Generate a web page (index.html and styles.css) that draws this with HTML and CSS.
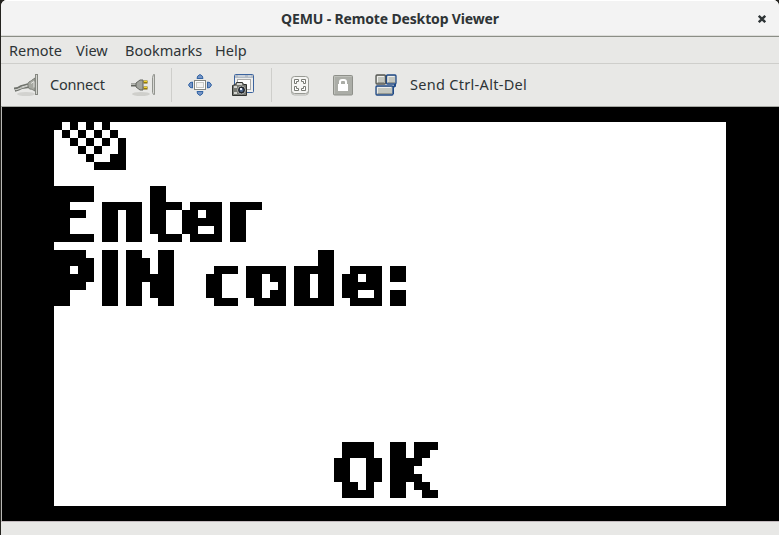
FILE: index.html
```html
<!DOCTYPE html>
<html lang="en">
<head>
<meta charset="utf-8">
<title>QEMU - Remote Desktop Viewer</title>
<link rel="stylesheet" href="styles.css">
</head>
<body>
<div class="window">
  <header class="titlebar">
    <h1 class="title">QEMU - Remote Desktop Viewer</h1>
    <svg class="close" width="8" height="8" viewBox="0 0 8 8"><path d="M.8.8l6.400 6.400M7.200.8L.8 7.200" stroke="#2e3436" stroke-width="2.300" fill="none"/></svg>
  </header>
  <nav class="menubar"><span class="m-remote">Remote</span><span class="m-view">View</span><span class="m-book">Bookmarks</span><span class="m-help">Help</span></nav>
  <div class="toolbar">
    <div class="tool connect">
      <svg width="26" height="24" viewBox="0 0 26 24">
        <ellipse cx="13" cy="21" rx="9" ry="2" fill="#d2d2cf"/>
        <path d="M1 15.500q4 0 7-2.500l7-2M2 18q4-1 7-3l7-1" stroke="#70736d" stroke-width="1.800" fill="none"/>
        <path d="M3 16.800l12-4" stroke="#d0d1cc" fill="none"/>
        <path d="M22 5c-3 2-4 3-6 4-2 1-1 7 1 7 2 0 3 1 5 2z" fill="#a6a8a1" stroke="#777a73"/>
        <path d="M18 10.500l3-2v6" stroke="#e3e3df" fill="none"/>
        <rect x="22.500" y="1.500" width="2" height="20" fill="#d4d5d0" stroke="#858781"/>
      </svg>
      <span class="l-connect">Connect</span>
    </div>
    <svg class="tool unplug" width="26" height="24" viewBox="0 0 26 24">
      <ellipse cx="10" cy="21" rx="9" ry="2" fill="#cfcfcb"/>
      <path d="M0 12h7" stroke="#62655f" stroke-width="3"/>
      <path d="M0 11.500h6" stroke="#b6b8b2"/>
      <path d="M5 10l4-3h3v10H9l-4-3z" fill="#a2a49e" stroke="#62655f"/>
      <path d="M12.500 9h4M12.500 15h4" stroke="#795f00" stroke-width="3"/>
      <path d="M13 8.500h3M13 14.500h3" stroke="#f0d32e" stroke-width="1.500"/>
      <path d="M23.500 1.500v20h-1l-1-2v-15l1-3z" fill="#d7d8d4" stroke="#92948f"/>
    </svg>
    <i class="sep s1"></i>
    <svg class="tool fullscreen" width="24" height="22" viewBox="0 0 24 22">
      <g fill="#7795c5" stroke="#3465a4">
        <path d="M9 4.500q0-3 3-4 3 1 3 4z"/><path d="M9 17.500q0 3 3 4 3-1 3-4z"/>
        <path d="M4.500 8q-3 0-4 3 1 3 4 3z"/><path d="M19.500 8q3 0 4 3-1 3-4 3z"/>
      </g>
      <rect x="6.500" y="6.500" width="11" height="9" fill="#fff" stroke="#858781"/>
      <rect x="8.500" y="8.500" width="7" height="5" fill="#f4f4f2" stroke="#c8c9c4"/>
    </svg>
    <svg class="tool shot" width="24" height="24" viewBox="0 0 24 24">
      <rect x="3.500" y="1.500" width="19" height="18" rx="1" fill="#eeeeec" stroke="#3b639e"/>
      <path d="M4 3.500h18" stroke="#b4bcc6" stroke-width="3"/><path d="M7 3h7M17 3h3" stroke="#dce3ec"/>
      <rect x="6.500" y="6.500" width="13" height="10" fill="#fff" stroke="#aaa"/>
      <path d="M1.500 12.500l3-1 1-2h6l1 2h3v11h-14z" fill="#777973" stroke="#30322f"/>
      <path d="M3 14h3M6 11h5M3 20h3" stroke="#d3d4d0" stroke-width="2"/>
      <circle cx="10.500" cy="17" r="4" fill="#20242b" stroke="#b2b3ae"/><circle cx="10.500" cy="17" r="2" fill="#50698e"/><path d="M9 15h2v2H9z" fill="#e7edf5"/>
    </svg>
    <i class="sep s2"></i>
    <svg class="tool scale" width="20" height="21" viewBox="0 0 20 21">
      <rect x="1.500" y="2.500" width="17" height="17.500" rx="3" fill="none" stroke="#b4b5b1"/>
      <rect x="1.500" y="1.500" width="17" height="17" rx="3" fill="#f5f5f3" stroke="#989a94"/>
      <path d="M4.500 8.500v-4h4v2h-2v2zM11.500 4.500h4v4h-2v-2h-2zM4.500 11.500h2v2h2v2h-4zM13.500 11.500h2v4h-4v-2h2z" fill="#fff" stroke="#777973"/>
    </svg>
    <svg class="tool lock" width="20" height="21" viewBox="0 0 20 21">
      <rect x=".5" y=".5" width="19" height="19.500" rx="1" fill="#abada7" stroke="#8e908a"/>
      <path d="M1.500 19V1.500h17" fill="none" stroke="#bec0ba"/>
      <path d="M5 9h1V7q0-3 3-3h2q3 0 3 3v2h1v7H5zM8 9h4V7q0-1-1-1H9Q8 6 8 7z" fill="#fff" fill-rule="evenodd"/>
    </svg>
    <div class="tool send">
      <svg width="22" height="22" viewBox="0 0 22 22">
        <path d="M20 9v3l-2 1v7" stroke="#204a87" stroke-width="2" fill="none"/>
        <rect x="1" y="1" width="9.500" height="9" rx="1" fill="#c3c6bf" stroke="#555753" stroke-width="1.300"/>
        <rect x="11.500" y="1" width="9.500" height="9" rx="1" fill="#c3c6bf" stroke="#204a87" stroke-width="1.300"/>
        <rect x="1" y="12" width="17" height="9" rx="1" fill="#c3c6bf" stroke="#204a87" stroke-width="1.300"/>
        <path d="M2.500 8V2.500H9M13 8V2.500h6.500M2.500 19v-5.500H16" stroke="#eeeeec" fill="none"/>
        <path d="M3 8.500h6M13 8.500h7M3 19.500h14" stroke="#969992"/>
      </svg>
      <span class="l-send">Send Ctrl-Alt-Del</span>
    </div>
  </div>
  <main class="remote">
    <svg class="screen" width="672" height="384" viewBox="0 0 672 384">
      <defs>
        <filter id="lcd" filterUnits="userSpaceOnUse" primitiveUnits="userSpaceOnUse" x="0" y="0" width="672" height="384" color-interpolation-filters="sRGB">
          <feFlood x="3" y="3" width="1" height="1" flood-color="#000" result="dot"/>
          <feOffset in="dot" dx="0" dy="0" x="0" y="0" width="8" height="8"/>
          <feTile x="0" y="0" width="672" height="384" result="grid"/>
          <feComposite in="SourceAlpha" in2="grid" operator="in"/>
          <feComponentTransfer><feFuncA type="discrete" tableValues="0 1"/></feComponentTransfer>
          <feMorphology operator="dilate" radius="3" result="a"/>
          <feOffset in="a" dx="1" dy="0" result="b"/>
          <feMerge result="c"><feMergeNode in="a"/><feMergeNode in="b"/></feMerge>
          <feOffset in="c" dx="0" dy="1" result="d"/>
          <feMerge><feMergeNode in="c"/><feMergeNode in="d"/></feMerge>
        </filter>
      </defs>
      <path shape-rendering="crispEdges" transform="scale(8)" d="M0 0h1v1H0zM2 0h1v1H2zM4 0h1v1H4zM6 0h1v1H6zM1 1h1v1H1zM3 1h1v1H3zM5 1h1v1H5zM7 1h1v1H7zM2 2h1v1H2zM4 2h1v1H4zM6 2h1v1H6zM8 2h1v4H5V5h2V4h1zM3 3h1v1H3zM5 3h1v1H5zM4 4h1v1H4z"/>
      <g class="lcd-text" filter="url(#lcd)">
        <text y="120" x="-6 42 92.300 125 170">Enter</text>
        <text y="184" x="-8 42 67">PIN</text>
        <text y="184" x="149 189 237 285 329">code:</text>
        <text y="376" x="280.500 330"><tspan class="mono">O</tspan>K</text>
      </g>
    </svg>
  </main>
  <footer class="status"></footer>
</div>
</body>
</html>
```
FILE: styles.css
```css
* { box-sizing: border-box; }
body { margin: 0; background: #24231f; width: 779px; height: 535px; overflow: hidden; }
.window { margin-left: 1px; width: 778px; height: 535px; display: flex; flex-direction: column; background: #e8e8e6; color: #2e3436; font: 14.5px/20px "Noto Sans", sans-serif; border-radius: 6px 6px 0 0; overflow: hidden; }
.titlebar { height: 37px; flex: none; background: #f3f3f3; border-top: 1px solid #fff; border-bottom: 1px solid #8b8e86; box-shadow: inset 0 -1px #dcdcd9; display: flex; align-items: center; justify-content: center; padding-left: 21px; }
.title { margin: 0 auto; font-size: 14px; line-height: 20px; font-weight: 700; white-space: nowrap; letter-spacing: -.15px; }
.close { margin-right: 13px; }
.menubar { height: 27px; flex: none; border-bottom: 1px solid #cececb; display: flex; align-items: center; padding: 0 0 1px 8px; }
.menubar span { white-space: nowrap; flex: none; }
.m-remote { width: 67px; }
.m-view { width: 49px; }
.m-book { width: 90px; }
.toolbar { height: 43px; flex: none; border-bottom: 1px solid #a6a8a2; display: flex; align-items: center; }
.tool { flex: none; }
.connect { display: flex; align-items: center; margin-left: 12px; gap: 11px; width: 118px; white-space: nowrap; }
.l-connect, .l-send { padding-bottom: 2px; letter-spacing: -.2px; }
.l-send { letter-spacing: .3px; }
.sep { width: 1px; height: 34px; background: #cececb; flex: none; }
.s1 { margin-left: 14px; }
.fullscreen { margin-left: 16px; }
.shot { margin-left: 19px; }
.s2 { margin-left: 16px; }
.scale { margin-left: 18px; }
.lock { margin-left: 23px; }
.send { display: flex; align-items: center; gap: 13px; margin-left: 22px; white-space: nowrap; }
.remote { height: 414px; flex: none; background: #000; border-left: 1px solid #b8b8b5; padding: 15px 0 0 52px; }
.screen { display: block; background: #fff; overflow: visible; }
.lcd-text { font: bold 76.8px "DejaVu Sans Condensed", "DejaVu Sans", sans-serif; font-stretch: condensed; fill: #000; stroke: #000; stroke-width: 2.500px; }
.mono { font-family: "DejaVu Sans Mono", monospace; font-stretch: normal; stroke-width: 3px; }
.status { flex: 1; border-top: 1px solid #c2b9bd; }
```
